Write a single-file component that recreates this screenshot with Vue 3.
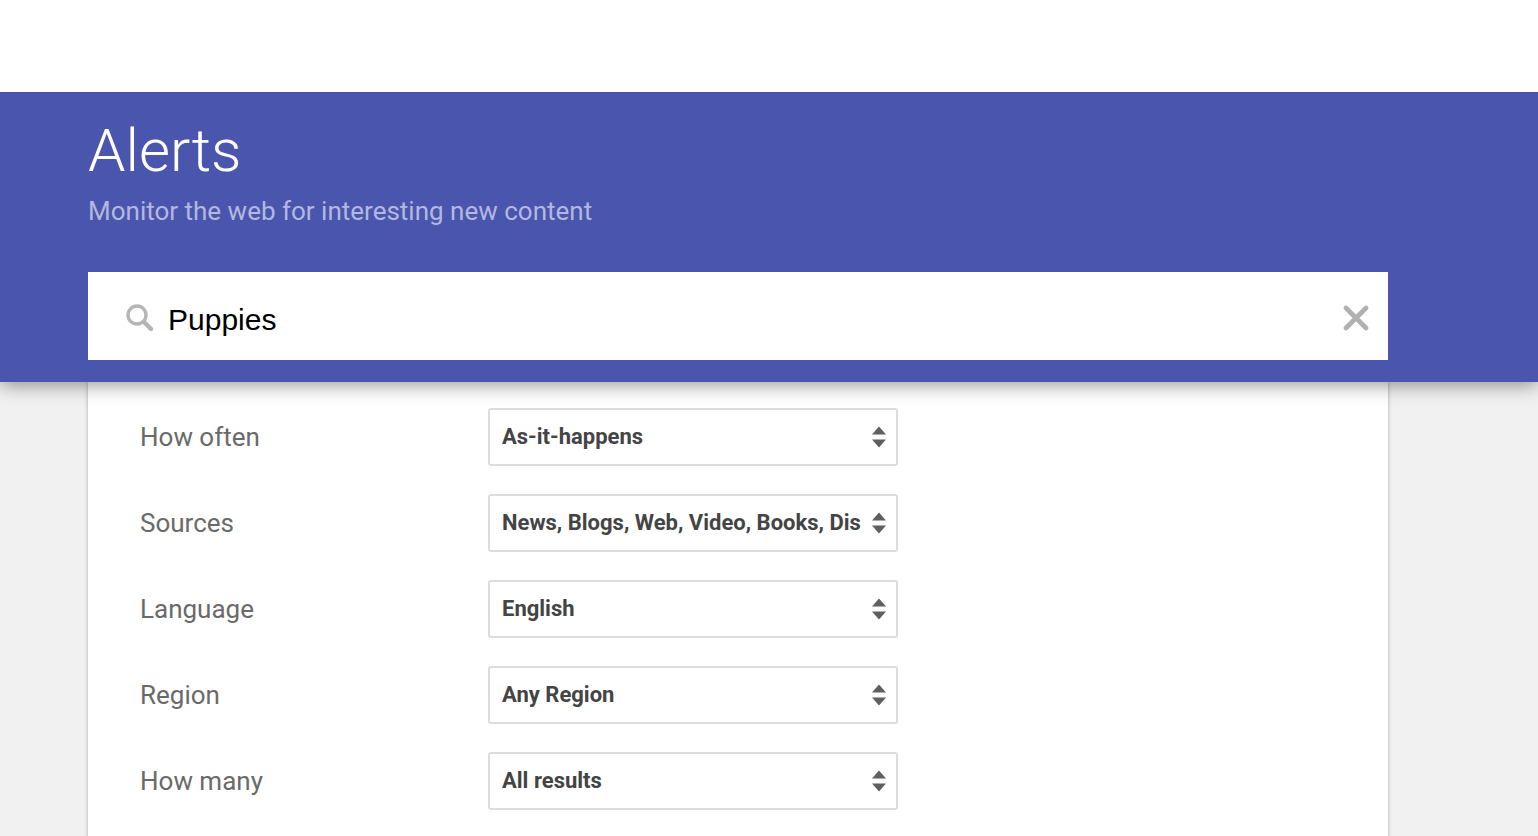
<script setup>
const rows = [
  { label: 'How often', value: 'As-it-happens' },
  { label: 'Sources', value: 'News, Blogs, Web, Video, Books, Dis' },
  { label: 'Language', value: 'English' },
  { label: 'Region', value: 'Any Region' },
  { label: 'How many', value: 'All results' },
]
</script>

<template>
  <div class="page">
    <header class="header">
      <div class="title">Alerts</div>
      <div class="subtitle">Monitor the web for interesting new content</div>
      <div class="search">
        <svg class="mag" width="30" height="30" viewBox="0 0 30 30">
          <circle cx="12" cy="12" r="9" fill="none" stroke="#b5b5b5" stroke-width="3.4" />
          <path d="M19 19L26 26" stroke="#b5b5b5" stroke-width="4.4" stroke-linecap="round" />
        </svg>
        <span class="query">Puppies</span>
        <svg class="close" width="26" height="26" viewBox="0 0 26 26">
          <path d="M3 3L23 23M23 3L3 23" stroke="#b0b0b0" stroke-width="4.6" stroke-linecap="round" />
        </svg>
      </div>
    </header>
    <main class="card">
      <div v-for="row in rows" :key="row.label" class="row">
        <div class="label">{{ row.label }}</div>
        <div class="select">
          <span class="value">{{ row.value }}</span>
          <svg class="arrows" width="16" height="24" viewBox="0 0 16 24">
            <path d="M8 1.5L15 9.5H1Z" fill="#5f5f5f" />
            <path d="M1 14.5H15L8 22.5Z" fill="#5f5f5f" />
          </svg>
        </div>
      </div>
    </main>
  </div>
</template>

<style>
html, body { margin: 0; height: 100%; overflow: hidden; background: #fff; }
</style>

<style scoped>
.page {
  height: 836px;
  overflow: hidden;
  padding-top: 92px;
  box-sizing: border-box;
  background: linear-gradient(#fff 92px, #f1f1f1 92px);
  font-family: Roboto, sans-serif;
  position: relative;
}
.header {
  height: 290px;
  box-sizing: border-box;
  background: #4a55ad;
  padding: 0 88px;
  position: relative;
  z-index: 1;
  box-shadow: 0 3px 18px rgba(0, 0, 0, 0.42);
  clip-path: inset(0 0 -40px 0);
}
.title {
  font-weight: 300;
  font-size: 60px;
  line-height: 70px;
  color: #fff;
  padding-top: 24px;
}
.subtitle {
  font-size: 26px;
  line-height: 30px;
  color: #b3b8e0;
  margin-top: 10px;
}
.search {
  margin-top: 46px;
  width: 1300px;
  height: 88px;
  background: #fff;
  display: flex;
  align-items: center;
  box-sizing: border-box;
  padding: 0 19px 0 37px;
}
.mag { flex: none; margin-top: 3px; filter: blur(0.5px); }
.query {
  font-family: "Liberation Sans", Arial, sans-serif;
  font-size: 30px;
  color: #000;
  margin-left: 13px;
  flex: 1;
  padding-top: 8px;
}
.close { flex: none; margin-top: 3px; filter: blur(0.6px); }
.card {
  width: 1300px;
  margin-left: 88px;
  height: 500px;
  box-sizing: border-box;
  background: #fff;
  box-shadow: 0 0 4px rgba(0, 0, 0, 0.3);
  padding: 26px 52px 0;
}
.row {
  display: flex;
  align-items: center;
  height: 58px;
  margin-bottom: 28px;
}
.label {
  width: 348px;
  font-size: 26px;
  color: #6a6a6a;
}
.select {
  width: 410px;
  height: 58px;
  box-sizing: border-box;
  border: 2px solid #dcdcdc;
  border-radius: 3px;
  display: flex;
  align-items: center;
  justify-content: space-between;
  padding: 0 9px 0 12px;
  background: #fff;
}
.value {
  font-weight: 700;
  font-size: 22px;
  line-height: 26px;
  color: #444;
  white-space: nowrap;
}
.arrows { flex: none; filter: blur(0.4px); }
</style>
